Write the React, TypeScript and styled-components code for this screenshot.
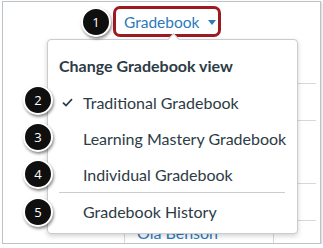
import styled, { createGlobalStyle } from "styled-components";

const GlobalStyle = createGlobalStyle`
  html, body {
    margin: 0;
    padding: 0;
    background: #ffffff;
  }
  body {
    font-family: Lato, "Noto Sans", sans-serif;
    color: #2d3b45;
  }
`;

const Frame = styled.div`
  position: relative;
  box-sizing: border-box;
  width: 319px;
  height: 243px;
  margin: 1px 0 0 2px;
  border: 1px solid #bcc3c8;
  box-shadow: 1px 1px 2px rgba(0, 0, 0, 0.18);
  overflow: hidden;
  background: #fff;
`;

const Header = styled.div`
  height: 81px;
  padding: 4px 0 0 110px;
  box-sizing: border-box;
`;

const ViewButton = styled.div`
  box-sizing: border-box;
  width: 108px;
  height: 31px;
  border: 3px solid #9d1a20;
  border-radius: 7px;
  display: flex;
  align-items: center;
  padding-left: 8px;
  gap: 9px;
  color: #2b7abc;
  font-size: 15.5px;
`;

const Caret = styled.span`
  width: 0;
  height: 0;
  border-left: 4px solid transparent;
  border-right: 4px solid transparent;
  border-top: 5px solid #2b7abc;
  margin-top: 2px;
`;

const Table = styled.div`
  margin-left: 44px;
  width: 269px;
  border-top: 1px solid #d4d9dc;
`;

const Row = styled.div<{ $h: number; $last?: boolean }>`
  display: grid;
  grid-template-columns: 77px 149px 1fr;
  height: ${({ $h }) => $h}px;
  border-bottom: ${({ $last }) => ($last ? "none" : "1px solid #d4d9dc")};
`;

const Cell = styled.div<{ $line?: boolean }>`
  border-left: ${({ $line }) => ($line ? "1px solid #d4d9dc" : "none")};
  padding: 2px 0 0 12px;
  font-size: 16px;
  line-height: 20px;
  color: #2b7abc;
`;

const Menu = styled.div`
  position: absolute;
  left: 44px;
  top: 37px;
  box-sizing: border-box;
  width: 251px;
  height: 195px;
  background: #fff;
  border: 1px solid #c7cdd1;
  border-radius: 4px;
  box-shadow: 0 2px 5px rgba(0, 0, 0, 0.18);
  padding-top: 14px;
`;

const Pointer = styled.span`
  position: absolute;
  left: 121px;
  top: -5px;
  width: 8px;
  height: 8px;
  background: #fff;
  border-top: 1px solid #c7cdd1;
  border-left: 1px solid #c7cdd1;
  transform: rotate(45deg);
`;

const MenuTitle = styled.div`
  height: 24px;
  line-height: 24px;
  padding-left: 11px;
  font-size: 16px;
  font-weight: 700;
  margin-bottom: 6px;
`;

const Item = styled.div`
  display: flex;
  align-items: center;
  height: 36px;
  padding-left: 14px;
  font-size: 16px;
`;

const CheckSlot = styled.span`
  width: 21px;
  display: flex;
  align-items: center;
`;

const Separator = styled.div`
  height: 1px;
  margin: 0 12px 0 11px;
  background: #c7cdd1;
`;

const Badge = styled.span<{ $x: number; $y: number }>`
  position: absolute;
  left: ${({ $x }) => $x}px;
  top: ${({ $y }) => $y}px;
  box-sizing: border-box;
  width: 30px;
  height: 30px;
  border-radius: 50%;
  background: #0f0f0f;
  border: 2px solid #fff;
  box-shadow: 1px 2px 3px rgba(0, 0, 0, 0.45);
  color: #fff;
  font-family: "Open Sans", Lato, sans-serif;
  font-size: 13px;
  display: flex;
  align-items: center;
  justify-content: center;
`;

const Check = () => (
  <svg width="11" height="9" viewBox="0 0 11 9">
    <path
      d="M1 4.6 L4 7.6 L10 1.2"
      fill="none"
      stroke="#2d3b45"
      strokeWidth="1.7"
    />
  </svg>
);

const views = [
  { label: "Traditional Gradebook", checked: true },
  { label: "Learning Mastery Gradebook" },
  { label: "Individual Gradebook" },
];

const App = () => (
  <>
    <GlobalStyle />
    <Frame>
      <Header>
        <ViewButton>
          Gradebook
          <Caret />
        </ViewButton>
      </Header>
      <Table>
        <Row $h={36}>
          <Cell />
          <Cell $line />
          <Cell $line />
        </Row>
        <Row $h={62}>
          <Cell />
          <Cell $line />
          <Cell $line />
        </Row>
        <Row $h={36}>
          <Cell />
          <Cell $line />
          <Cell $line />
        </Row>
        <Row $h={40} $last>
          <Cell />
          <Cell $line>Ola Benson</Cell>
          <Cell $line />
        </Row>
      </Table>
      <Menu>
        <Pointer />
        <MenuTitle>Change Gradebook view</MenuTitle>
        {views.map((v) => (
          <Item key={v.label}>
            <CheckSlot>{v.checked && <Check />}</CheckSlot>
            {v.label}
          </Item>
        ))}
        <Separator />
        <Item>
          <CheckSlot />
          Gradebook History
        </Item>
      </Menu>
      <Badge $x={78} $y={5}>1</Badge>
      <Badge $x={20} $y={83}>2</Badge>
      <Badge $x={20} $y={120}>3</Badge>
      <Badge $x={20} $y={157}>4</Badge>
      <Badge $x={20} $y={195}>5</Badge>
    </Frame>
  </>
);

export default App;
